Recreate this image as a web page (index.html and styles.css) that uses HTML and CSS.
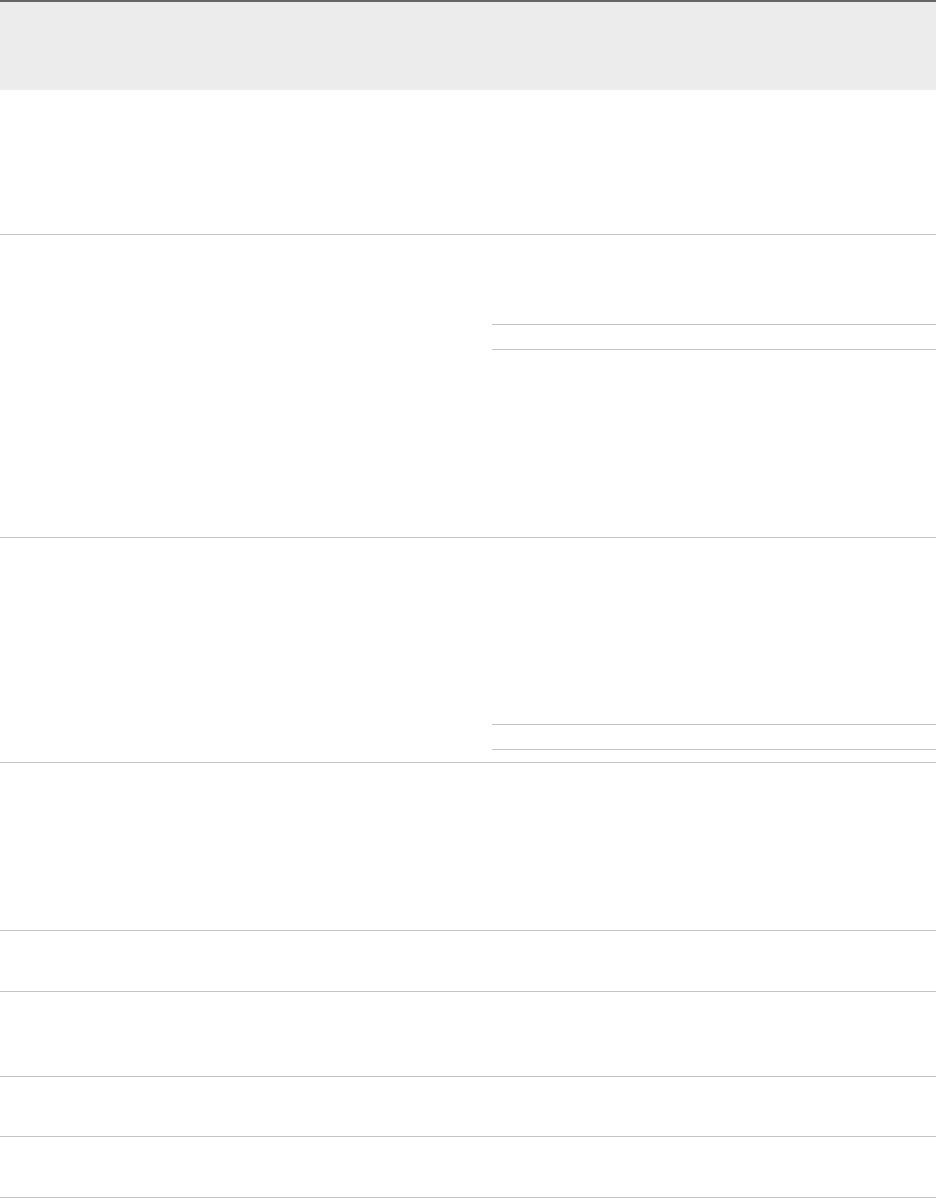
FILE: index.html
```html
<!DOCTYPE html>
<html>
<head>
<meta charset="utf-8">
<link rel="stylesheet" href="styles.css">
</head>
<body>
<div class="table">
  <div class="head"></div>
  <div class="row h144"></div>
  <div class="row h302">
    <div class="cell left"></div>
    <div class="cell right">
      <div class="sub h89"></div>
      <div class="sub h24"></div>
      <div class="sub grow"></div>
    </div>
  </div>
  <div class="row h224">
    <div class="cell left"></div>
    <div class="cell right">
      <div class="sub h186"></div>
      <div class="sub h24"></div>
      <div class="sub grow"></div>
    </div>
  </div>
  <div class="row h167"></div>
  <div class="row h60"></div>
  <div class="row h84"></div>
  <div class="row h59"></div>
  <div class="row h60"></div>
</div>
</body>
</html>
```
FILE: styles.css
```css
html, body {
  margin: 0;
  padding: 0;
  background: #ffffff;
  font-family: "Liberation Sans", Arial, sans-serif;
}
.table {
  width: 936px;
  border-top: 2px solid #666666;
  display: flex;
  flex-direction: column;
}
.head {
  height: 88px;
  background: #ececec;
}
.row {
  display: flex;
  border-bottom: 1px solid #c4c4c4;
}
.cell.left {
  width: 492px;
}
.cell.right {
  flex: 1;
  display: flex;
  flex-direction: column;
}
.sub {
  border-bottom: 1px solid #c4c4c4;
}
.sub.grow {
  flex: 1;
  border-bottom: none;
}
.h144 { height: 144px; }
.h302 { height: 302px; }
.h224 { height: 224px; }
.h167 { height: 167px; }
.h60 { height: 60px; }
.h84 { height: 84px; }
.h59 { height: 59px; }
.h89 { height: 89px; }
.h24 { height: 24px; }
.h186 { height: 186px; }
```
